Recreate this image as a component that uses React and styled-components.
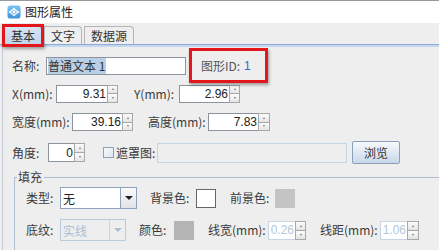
import React from 'react';
import styled, { createGlobalStyle } from 'styled-components';

const GlobalStyle = createGlobalStyle`
  html, body {
    margin: 0;
    padding: 0;
    background: #eeeeee;
  }
  body {
    font-family: 'Noto Sans CJK SC', 'Liberation Sans', sans-serif;
    font-size: 12px;
    color: #333;
  }
`;

const Window = styled.div`
  width: 439px;
  height: 250px;
  overflow: hidden;
  background: #eeeeee;
  display: flex;
  flex-direction: column;
`;

const TitleBar = styled.div`
  height: 23px;
  flex: none;
  background: #ffffff;
  border-top: 1px solid #9a9a9a;
  box-sizing: border-box;
  display: flex;
  align-items: center;
  padding-left: 7px;
  gap: 4px;
  font-size: 12px;
  color: #222;
  line-height: 14px;
`;

const TabStrip = styled.div`
  flex: none;
  display: flex;
  align-items: flex-end;
  gap: 2px;
  height: 21px;
  padding-left: 4px;
  box-sizing: border-box;
`;

const Tab = styled.div`
  position: relative;
  height: 18px;
  box-sizing: border-box;
  padding: 0 6px;
  display: flex;
  align-items: center;
  line-height: 14px;
  font-size: 12px;
  color: #333;
  border: 1px solid ${(p) => (p.$active ? '#9fb6d2' : '#b5b5b5')};
  border-bottom: none;
  border-radius: 0 4px 0 0;
  background: ${(p) =>
    p.$active ? 'linear-gradient(#d7e4f2, #c0d4ea)' : '#eeeeee'};
`;

const Mark = styled.div`
  position: absolute;
  left: ${(p) => p.$l}px;
  top: ${(p) => p.$t}px;
  right: ${(p) => p.$r}px;
  bottom: ${(p) => p.$b}px;
  border: 3px solid #e3161c;
  box-shadow: 1px 2px 3px rgba(0, 0, 0, 0.35);
  pointer-events: none;
`;

const TabLine = styled.div`
  flex: none;
  height: 3px;
  border-top: 1px solid #8ea9d6;
  background: #c5d7ef;
  box-sizing: border-box;
`;

const Panel = styled.div`
  flex: 1;
  width: 470px;
  margin-left: 2px;
  border-left: 1px solid #c4ccd6;
  display: flex;
  flex-direction: column;
`;

const Row = styled.div`
  display: flex;
  align-items: center;
  height: ${(p) => p.$h || 18}px;
  margin-top: ${(p) => p.$mt || 0}px;
  padding-left: ${(p) => p.$pl ?? 9}px;
  flex: none;
`;

const Label = styled.span`
  width: ${(p) => p.$w}px;
  margin-left: ${(p) => p.$ml || 0}px;
  flex: none;
  white-space: nowrap;
  font-size: 12px;
  line-height: 14px;
  color: #3a3a3a;
`;

const TextInput = styled.div`
  width: ${(p) => p.$w}px;
  height: ${(p) => p.$h || 18}px;
  margin-left: ${(p) => p.$ml || 0}px;
  box-sizing: border-box;
  flex: none;
  background: ${(p) => (p.$disabled ? '#eeeeee' : '#ffffff')};
  border: 1px solid ${(p) => (p.$disabled ? '#c5d5e6' : '#8c959e')};
  display: flex;
  align-items: center;
  padding-left: 1px;
`;

const Selected = styled.span`
  background: #b8cfe5;
  color: #333;
  line-height: 16px;
  padding-right: 1px;
  font-size: 12px;
`;

const IdBox = styled.div`
  position: relative;
  margin-left: 15px;
  display: flex;
  align-items: center;
  gap: 4px;
  font-size: 12px;
  line-height: 14px;
  color: #555;
`;

const IdValue = styled.span`
  font-family: 'Liberation Sans', sans-serif;
  color: #3d5fd9;
`;

const SpinWrap = styled.div`
  display: flex;
  flex: none;
  height: ${(p) => p.$h || 18}px;
  margin-left: ${(p) => p.$ml || 0}px;
`;

const SpinField = styled.div`
  width: ${(p) => p.$w}px;
  box-sizing: border-box;
  background: #ffffff;
  border: 1px solid ${(p) => (p.$disabled ? '#c5d5e6' : '#8c959e')};
  border-right: none;
  display: flex;
  align-items: center;
  justify-content: flex-end;
  padding-right: 1px;
  font-family: 'Liberation Sans', sans-serif;
  font-size: 12px;
  color: ${(p) => (p.$disabled ? '#b4c6da' : '#222')};
`;

const SpinButtons = styled.div`
  width: ${(p) => p.$w || 11}px;
  display: flex;
  flex-direction: column;
  box-sizing: border-box;
  border: 1px solid #a8a8a8;
`;

const SpinBtn = styled.div`
  flex: 1;
  background: linear-gradient(#fbfbfb, #e4e4e4);
  display: flex;
  align-items: center;
  justify-content: center;
  & + & {
    border-top: 1px solid #a8a8a8;
  }
  &::after {
    content: '';
    width: 0;
    height: 0;
    border-left: 1.5px solid transparent;
    border-right: 1.5px solid transparent;
    ${(p) =>
      p.$up
        ? 'border-bottom: 2px solid #777;'
        : 'border-top: 2px solid #777;'}
  }
`;

const Spinner = ({ value, w, bw, h, ml, disabled }) => (
  <SpinWrap $h={h} $ml={ml}>
    <SpinField $w={w} $disabled={disabled}>{value}</SpinField>
    <SpinButtons $w={bw}>
      <SpinBtn $up />
      <SpinBtn />
    </SpinButtons>
  </SpinWrap>
);

const CheckBox = styled.div`
  width: 11px;
  height: 11px;
  margin-left: ${(p) => p.$ml || 0}px;
  box-sizing: border-box;
  flex: none;
  border: 1px solid #8ea0b4;
  background: linear-gradient(135deg, #f8fbff, #dbe6f2);
`;

const Button = styled.div`
  width: 48px;
  height: 23px;
  margin-left: ${(p) => p.$ml || 0}px;
  box-sizing: border-box;
  flex: none;
  border: 1px solid #8aa0b8;
  border-radius: 2px;
  background: linear-gradient(#f6f9fc, #c8d8ea);
  display: flex;
  align-items: center;
  justify-content: center;
  font-size: 12px;
  color: #333;
`;

const Group = styled.fieldset`
  margin: 6px 0 0 11px;
  padding: 0;
  border: 1px solid #aebfd3;
  border-bottom: none;
  border-right: none;
  min-width: 0;
  flex: 1;
`;

const Legend = styled.legend`
  margin-left: 2px;
  padding: 0 2px 0 1px;
  font-size: 12px;
  line-height: 14px;
  color: #3a3a3a;
`;

const Select = styled.div`
  width: ${(p) => p.$w}px;
  height: 22px;
  box-sizing: border-box;
  flex: none;
  display: flex;
  background: ${(p) => (p.$disabled ? '#eeeeee' : '#ffffff')};
  border: 1px solid ${(p) => (p.$disabled ? '#b8cbe0' : '#8aa2bd')};
`;

const SelectText = styled.div`
  flex: 1;
  display: flex;
  align-items: center;
  padding-left: 2px;
  font-size: 12px;
  color: ${(p) => (p.$disabled ? '#a9bdd4' : '#222')};
`;

const SelectArrow = styled.div`
  width: ${(p) => p.$w}px;
  border-left: 1px solid ${(p) => (p.$disabled ? '#c8d6e6' : '#8aa2bd')};
  background: ${(p) =>
    p.$disabled ? '#eeeeee' : 'linear-gradient(#fbfbfb, #e2e2e2)'};
  display: flex;
  align-items: center;
  justify-content: center;
  &::after {
    content: '';
    border-left: 4px solid transparent;
    border-right: 4px solid transparent;
    border-top: 4px solid ${(p) => (p.$disabled ? '#a9bdd4' : '#222')};
  }
`;

const Swatch = styled.div`
  width: 20px;
  height: 19px;
  margin-left: ${(p) => p.$ml || 0}px;
  box-sizing: border-box;
  flex: none;
  background: ${(p) => p.$color};
  border: 1px solid ${(p) => (p.$color === '#ffffff' ? '#666' : p.$color)};
`;

const AppIcon = () => (
  <svg width="14" height="14" viewBox="0 0 14 14">
    <defs>
      <linearGradient id="ig" x1="0" y1="0" x2="0" y2="1">
        <stop offset="0" stopColor="#7cc4f2" />
        <stop offset="1" stopColor="#3f93dc" />
      </linearGradient>
    </defs>
    <rect x="0.5" y="0.5" width="13" height="13" rx="2.5" fill="url(#ig)" />
    <path d="M3 7 L7 3.5 L11 7 L7 10.5 Z" fill="none" stroke="#fff" strokeWidth="1.2" />
    <circle cx="7" cy="7" r="1.4" fill="#fff" />
    <circle cx="3" cy="7" r="1.1" fill="#fff" />
    <circle cx="11" cy="7" r="1.1" fill="#fff" />
  </svg>
);

export default function App() {
  return (
    <>
      <GlobalStyle />
      <Window>
        <TitleBar>
          <AppIcon />
          <span>图形属性</span>
        </TitleBar>
        <TabStrip>
          <Tab $active>
            基本
            <Mark $l={-3} $t={-3} $r={-3} $b={-3} />
          </Tab>
          <Tab>文字</Tab>
          <Tab>数据源</Tab>
        </TabStrip>
        <TabLine />
        <Panel>
          <Row $mt={10}>
            <Label $w={34}>名称:</Label>
            <TextInput $w={140}>
              <Selected>普通文本 1</Selected>
            </TextInput>
            <IdBox>
              <span>图形ID:</span>
              <IdValue>1</IdValue>
              <Mark $l={-12} $t={-11} $r={-17} $b={-10} />
            </IdBox>
          </Row>
          <Row $mt={9} $h={19}>
            <Label $w={44}>X(mm):</Label>
            <Spinner value="9.31" w={51} />
            <Label $w={45} $ml={16}>Y(mm):</Label>
            <Spinner value="2.96" w={50} />
          </Row>
          <Row $mt={10}>
            <Label $w={60}>宽度(mm):</Label>
            <Spinner value="39.16" w={50} />
            <Label $w={60} $ml={15}>高度(mm):</Label>
            <Spinner value="7.83" w={50} bw={12} />
          </Row>
          <Row $mt={10} $h={23}>
            <Label $w={36}>角度:</Label>
            <Spinner value="0" w={26} h={19} />
            <CheckBox $ml={18} />
            <Label $w={41} $ml={2}>遮罩图:</Label>
            <TextInput $w={190} $h={20} $disabled />
            <Button $ml={5}>浏览</Button>
          </Row>
          <Group>
            <Legend>填充</Legend>
            <Row $mt={3} $h={22} $pl={11}>
              <Label $w={34}>类型:</Label>
              <Select $w={77}>
                <SelectText>无</SelectText>
                <SelectArrow $w={15} />
              </Select>
              <Label $w={46} $ml={13}>背景色:</Label>
              <Swatch $color="#ffffff" />
              <Label $w={45} $ml={14}>前景色:</Label>
              <Swatch $color="#c4c4c4" />
            </Row>
            <Row $mt={10} $h={22} $pl={11}>
              <Label $w={34}>底纹:</Label>
              <Select $w={66} $disabled>
                <SelectText $disabled>实线</SelectText>
                <SelectArrow $w={15} $disabled />
              </Select>
              <Label $w={35} $ml={13}>颜色:</Label>
              <Swatch $color="#b4b4b4" />
              <Label $w={60} $ml={14}>线宽(mm):</Label>
              <Spinner value="0.26" w={27} h={19} disabled />
              <Label $w={60} $ml={14}>线距(mm):</Label>
              <Spinner value="1.06" w={27} bw={12} h={19} disabled />
            </Row>
          </Group>
        </Panel>
      </Window>
    </>
  );
}
